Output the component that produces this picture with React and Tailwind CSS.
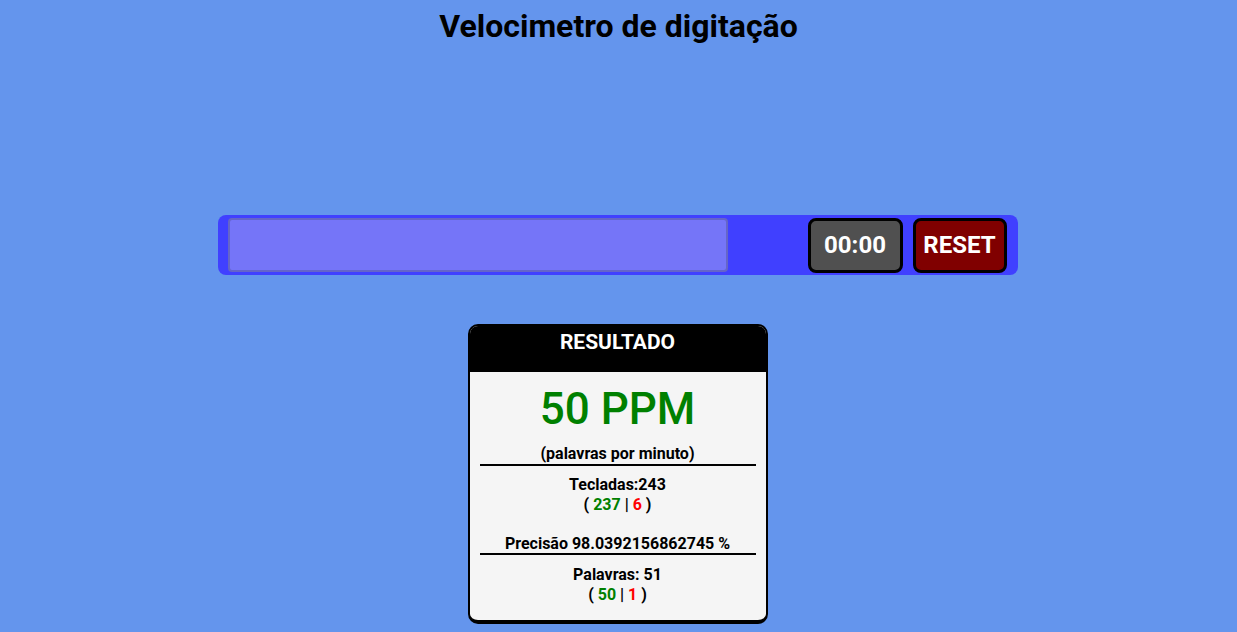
export default function App() {
    return (
        <div className="min-h-screen bg-[#6495ED] font-['Roboto',sans-serif] text-black">
            <h1 className="pt-2 text-center text-[32px] font-bold leading-[1.17]">Velocimetro de digitação</h1>

            {/* Typing bar */}
            <div className="mx-auto mt-[170px] flex h-[60px] w-[800px] -translate-x-px items-center rounded-lg bg-[#4040FF] pl-[10px] pr-[11px]">
                <input
                    type="text"
                    className="h-[54px] w-[500px] rounded border-2 border-[#6565c8] bg-[#7575F8] outline-none"
                />
                <div className="ml-auto flex h-[55px] w-[95px] items-center justify-center rounded-lg border-[3px] border-black bg-[#505050] text-2xl font-bold text-white">
                    00:00
                </div>
                <button className="ml-[10px] flex h-[55px] w-[94px] items-center justify-center rounded-lg border-[3px] border-black bg-[#800000] text-2xl font-bold text-white">
                    RESET
                </button>
            </div>

            {/* Result card */}
            <div className="mx-auto mt-[49px] flex h-[300px] w-[300px] -translate-x-px flex-col overflow-hidden rounded-[10px] border-2 border-b-4 border-black bg-[#F5F5F5]">
                <div className="h-[46px] bg-black pt-[1px] text-center text-[21px] font-bold text-white">RESULTADO</div>
                <div className="px-[10px] text-center text-base font-bold leading-5">
                    <div className="mt-[10px] text-[44px] font-medium leading-[54px] text-[#008000]">50 PPM</div>
                    <div className="mt-2">(palavras por minuto)</div>
                    <hr className="border-t-2 border-black" />
                    <div className="mt-[9px]">Tecladas:243</div>
                    <div>
                        ( <span className="text-[#008000]">237</span> | <span className="text-[#FF0000]">6</span> )
                    </div>
                    <div className="mt-[19px]">Precisão 98.0392156862745 %</div>
                    <hr className="-mt-px border-t-2 border-black" />
                    <div className="mt-[10px]">Palavras: 51</div>
                    <div>
                        ( <span className="text-[#008000]">50</span> | <span className="text-[#FF0000]">1</span> )
                    </div>
                </div>
            </div>
        </div>
    );
}
